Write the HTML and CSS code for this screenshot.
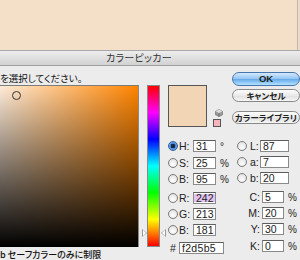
FILE: index.html
```html
<!DOCTYPE html>
<html lang="ja">
<head>
    <meta charset="UTF-8">
    <title>カラーピッカー</title>
    <link rel="stylesheet" href="styles.css">
</head>
<body>
<div class="desktop"><div class="doc"></div></div>

<div class="dialog">
    <div class="titlebar">カラーピッカー</div>

    <div class="content">
        <!-- Farbfeld -->
        <div class="picker">
            <p class="prompt">を選択してください。</p>
            <div class="field"><span class="cursor"></span></div>
            <p class="websafe">b セーフカラーのみに制限</p>
        </div>

        <!-- Farbton-Regler -->
        <div class="hue-col">
            <div class="hue"></div>
            <span class="arrow arrow-left"></span>
            <span class="arrow arrow-right"></span>
        </div>

        <!-- HSB / RGB -->
        <div class="values">
            <div class="swatch-row">
                <div class="swatch"></div>
                <div class="swatch-icons">
                    <svg class="cube" width="8" height="8" viewBox="0 0 8 8">
                        <path d="M4 0.5 L7.5 2.3 L7.5 5.8 L4 7.6 L0.5 5.8 L0.5 2.3 Z" fill="#9a9a9a" stroke="#666" stroke-width="0.6"/>
                        <path d="M4 0.5 L7.5 2.3 L4 4.1 L0.5 2.3 Z" fill="#dcdcdc"/>
                        <path d="M4 4.1 L4 7.6" stroke="#555" stroke-width="0.6"/>
                    </svg>
                    <span class="chip"></span>
                </div>
            </div>
            <div class="row r-h"><span class="radio on"></span><span class="lbl">H:</span><span class="box">31</span><span class="unit">°</span></div>
            <div class="row r-s"><span class="radio"></span><span class="lbl">S:</span><span class="box">25</span><span class="unit">%</span></div>
            <div class="row"><span class="radio"></span><span class="lbl">B:</span><span class="box">95</span><span class="unit">%</span></div>
            <div class="row r-r"><span class="radio"></span><span class="lbl">R:</span><span class="box sel">242</span></div>
            <div class="row"><span class="radio"></span><span class="lbl">G:</span><span class="box">213</span></div>
            <div class="row"><span class="radio"></span><span class="lbl">B:</span><span class="box">181</span></div>
            <div class="row r-hex"><span class="hash">#</span><span class="box hex">f2d5b5</span></div>
        </div>

        <!-- Buttons, Lab, CMYK -->
        <div class="side">
            <div class="btn btn-ok">OK</div>
            <div class="btn btn-cancel">キャンセル</div>
            <div class="btn btn-lib">カラーライブラリ</div>

            <div class="row lab r-l"><span class="radio"></span><span class="lbl">L:</span><span class="box">87</span></div>
            <div class="row lab"><span class="radio"></span><span class="lbl">a:</span><span class="box">7</span></div>
            <div class="row lab"><span class="radio"></span><span class="lbl">b:</span><span class="box">20</span></div>

            <div class="row cmyk r-c"><span class="lbl">C:</span><span class="box">5</span><span class="unit">%</span></div>
            <div class="row cmyk"><span class="lbl">M:</span><span class="box">20</span><span class="unit">%</span></div>
            <div class="row cmyk"><span class="lbl">Y:</span><span class="box">30</span><span class="unit">%</span></div>
            <div class="row cmyk r-k"><span class="lbl">K:</span><span class="box">0</span><span class="unit">%</span></div>
        </div>
    </div>
</div>
</body>
</html>
```

FILE: styles.css
```css
body {
    margin: 0;
    width: 300px;
    height: 260px;
    overflow: hidden;
    font-family: "Liberation Sans", Arial, sans-serif;
    color: #222;
    background: #e9ddce;
}

p {
    margin: 0;
}

.desktop {
    height: 50px;
}

.doc {
    width: 297px;
    height: 50px;
    background: #f4e0c8;
    border-right: 1px solid #c8b7a2;
}

.dialog {
    background: #ececec;
    height: 210px;
}

.titlebar {
    height: 14px;
    line-height: 14px;
    border-top: 1px solid #a8a8a8;
    border-bottom: 1px solid #a0a0a0;
    background: linear-gradient(#ededed, #d2d2d2);
    text-align: center;
    font-family: "Noto Sans CJK JP", sans-serif;
    font-size: 10px;
    color: #333;
    padding-right: 22px;
    font-feature-settings: "palt" 1;
    letter-spacing: 0.3px;
}

.content {
    display: flex;
    height: 194px;
}

/* Farbfeld */
.picker {
    width: 139px;
    padding-top: 6px;
}

.prompt,
.websafe {
    font-family: "Noto Sans CJK JP", sans-serif;
    font-feature-settings: "palt" 1;
    font-size: 9.5px;
    line-height: 13px;
    height: 13px;
    white-space: nowrap;
    color: #111;
}

.websafe {
    margin-top: 1px;
    font-size: 9px;
    font-weight: 500;
}

.field {
    position: relative;
    height: 161px;
    border-top: 1px solid #7c7c7c;
    border-right: 1px solid #8a8a8a;
    background:
        linear-gradient(to bottom, rgba(0, 0, 0, 0), #000),
        linear-gradient(to right, #fff, #ff8400);
    background-size: 163px 100%;
    background-position: right top;
}

.cursor {
    position: absolute;
    left: 12px;
    top: 5px;
    width: 7px;
    height: 7px;
    border: 1px solid #333;
    border-radius: 50%;
}

/* Farbton */
.hue-col {
    position: relative;
    margin-left: 3px;
    padding: 19px 5px 0;
    width: 13px;
}

.hue {
    height: 160px;
    border: 1px solid #888;
    background: linear-gradient(to bottom, #f00 0%, #f0f 16.67%, #00f 33.33%, #0ff 50%, #0f0 66.67%, #ff0 83.33%, #f00 100%);
}

.arrow {
    position: absolute;
    top: 163px;
    width: 0;
    height: 0;
    border-top: 4px solid transparent;
    border-bottom: 4px solid transparent;
}

.arrow::after {
    content: "";
    position: absolute;
    top: -3px;
    border-top: 3px solid transparent;
    border-bottom: 3px solid transparent;
}

.arrow-left {
    left: 0;
    border-left: 5px solid #999;
}

.arrow-left::after {
    left: -4px;
    border-left: 3px solid #fff;
}

.arrow-right {
    right: -1px;
    border-right: 5px solid #999;
}

.arrow-right::after {
    right: -4px;
    border-right: 3px solid #fff;
}

/* Werte */
.values {
    margin-left: 3px;
    width: 64px;
}

.swatch-row {
    display: flex;
    margin-top: 19px;
    height: 42px;
}

.swatch {
    width: 37px;
    height: 40px;
    background: #f2d5b5;
    border: 1px solid #555;
}

.swatch-icons {
    display: flex;
    flex-direction: column;
    justify-content: flex-end;
    margin-left: 6px;
}

.cube {
    display: block;
    margin: 0 0 2px 2px;
}

.chip {
    width: 6px;
    height: 6px;
    background: #f6b4bd;
    border: 1px solid #555;
}

.row {
    display: flex;
    align-items: center;
    height: 16px;
    font-size: 10.5px;
}

.r-h {
    margin-top: 11px;
}

.r-s {
    margin-top: 1px;
}

.r-r {
    margin-top: 3px;
}

.r-hex {
    margin-top: 2px;
}

.radio {
    flex: none;
    box-sizing: border-box;
    width: 10px;
    height: 10px;
    border: 1px solid #7a7a7a;
    border-radius: 50%;
    background: radial-gradient(circle at 50% 65%, #fff, #dadada);
}

.radio.on {
    border-color: #34609a;
    background: radial-gradient(circle, #1b2740 0 2px, #3f86dc 2.5px, #a9d0f6 100%);
}

.lbl {
    width: 15px;
    padding-left: 1px;
    box-sizing: border-box;
}

.box {
    box-sizing: border-box;
    width: 23px;
    height: 12px;
    line-height: 10px;
    padding-left: 2px;
    background: #fff;
    border: 1px solid #8a8a8a;
    border-top-color: #5e5e5e;
    font-size: 10.5px;
}

.box.sel {
    background: linear-gradient(#fff 0 1px, #e2c4f2 1px, #e2c4f2 9px, #fff 9px);
}

.unit {
    margin-left: 4px;
    font-size: 10px;
}

.hash {
    width: 9px;
    padding-left: 2px;
}

.box.hex {
    width: 45px;
    letter-spacing: 0.3px;
}

/* rechte Spalte */
.side {
    width: 68px;
    padding-top: 6px;
}

.btn {
    box-sizing: border-box;
    height: 13px;
    line-height: 11px;
    border: 1px solid #888;
    border-radius: 7px;
    background: linear-gradient(#fdfdfd, #eaeaea 50%, #dedede 51%, #f7f7f7);
    text-align: center;
    font-family: "Noto Sans CJK JP", sans-serif;
    font-feature-settings: "palt" 1;
    font-weight: bold;
    font-size: 8.5px;
    white-space: nowrap;
}

.btn-ok {
    height: 14px;
    line-height: 12px;
    font-family: "Liberation Sans", sans-serif;
    font-size: 9.5px;
    border-color: #4874ad;
    background: linear-gradient(#d4e9fc, #91c4f2 50%, #64a8ea 51%, #b4e2fd);
}

.btn-cancel {
    margin-top: 3px;
}

.btn-lib {
    margin-top: 9px;
}

.lab .radio {
    margin-left: 5px;
}

.lab .lbl {
    width: 13px;
    padding-left: 3px;
}

.lab .box {
    width: 29px;
}

.r-l {
    margin-top: 14px;
}

.cmyk .lbl {
    width: 30px;
    text-align: right;
    padding-right: 2px;
}

.cmyk .box {
    width: 22px;
}

.r-c {
    margin-top: 3px;
}

.r-k {
    margin-top: 1px;
}
```
